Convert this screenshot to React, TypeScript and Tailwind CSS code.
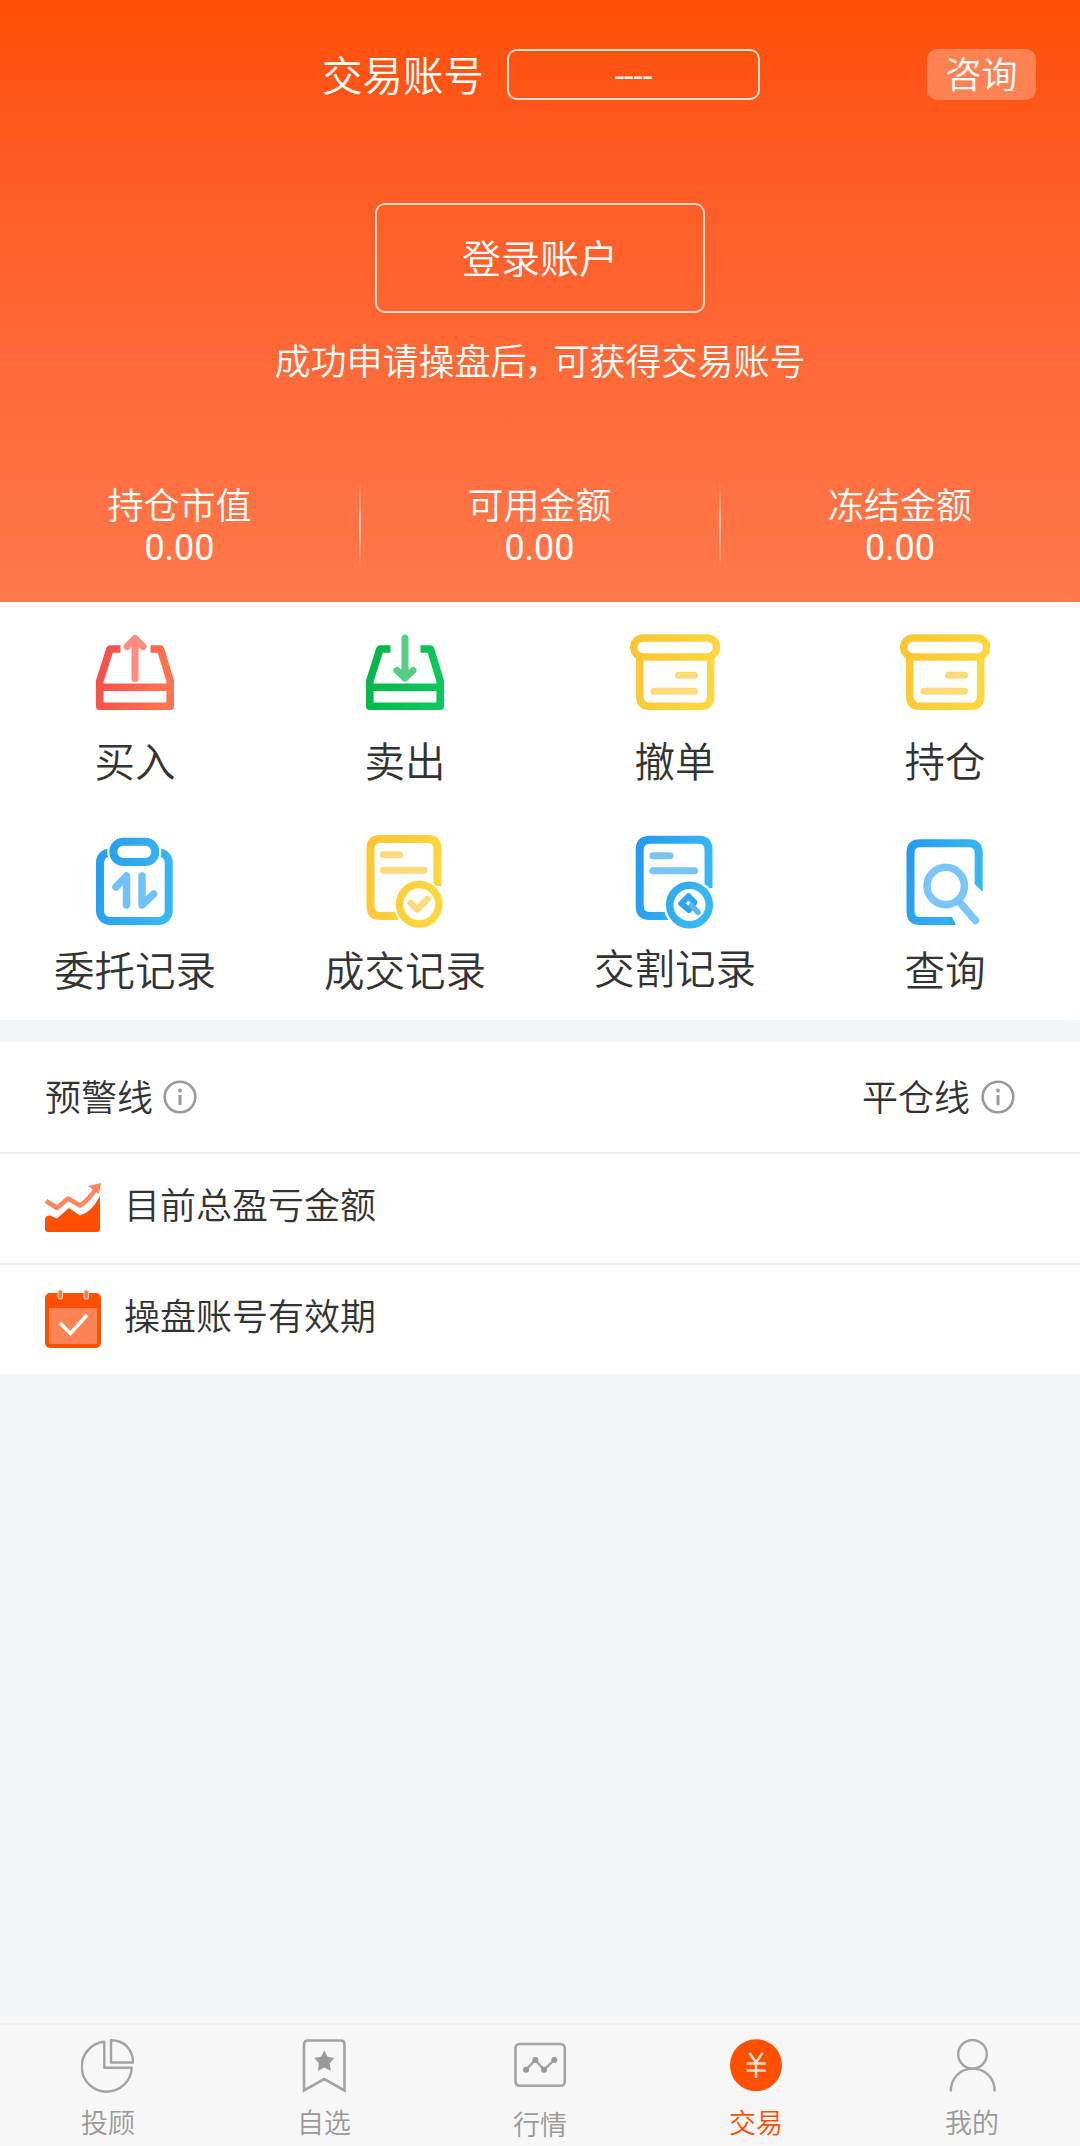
import type { ReactNode } from 'react'

interface Action {
  label:  string
  icon:   ReactNode
  raised?: boolean
}

interface Tab {
  label:   string
  icon:    ReactNode
  active?: boolean
  low?:    boolean
}

/* Shared horizontal gradients for the shortcut icons */
function Gradients() {
  return (
    <svg className="absolute h-0 w-0" aria-hidden="true">
      <defs>
        <linearGradient id="red" gradientUnits="userSpaceOnUse" x1="6" y1="0" x2="84" y2="20">
          <stop offset="0" stopColor="#f4474a" />
          <stop offset="1" stopColor="#ff7350" />
        </linearGradient>
        <linearGradient id="green" gradientUnits="userSpaceOnUse" x1="6" y1="0" x2="84" y2="20">
          <stop offset="0" stopColor="#05b243" />
          <stop offset="1" stopColor="#0cc85c" />
        </linearGradient>
        <linearGradient id="yellow" gradientUnits="userSpaceOnUse" x1="6" y1="0" x2="84" y2="20">
          <stop offset="0" stopColor="#fcc434" />
          <stop offset="1" stopColor="#fdd73e" />
        </linearGradient>
        <linearGradient id="blue" gradientUnits="userSpaceOnUse" x1="6" y1="0" x2="84" y2="20">
          <stop offset="0" stopColor="#2698ee" />
          <stop offset="1" stopColor="#36b9f2" />
        </linearGradient>
      </defs>
    </svg>
  )
}

function TrayBody({ stroke }: { stroke: string }) {
  return (
    <g fill="none" stroke={stroke} strokeWidth="7.6" strokeLinejoin="round">
      <path d="M30.5 24H20L9.800 56V81.300H80.200V56L70.500 24H60.500" />
      <path d="M10 62.300H80" />
    </g>
  )
}

function BuyIcon() {
  return (
    <svg className="h-[96px] w-[90px]" viewBox="0 0 90 96">
      <TrayBody stroke="url(#red)" />
      <path d="M45 53.500V14M37 21.500L45 13.500L53 21.500" fill="none" stroke="#ff8c7e" strokeWidth="7" strokeLinecap="round" strokeLinejoin="round" />
    </svg>
  )
}

function SellIcon() {
  return (
    <svg className="h-[96px] w-[90px]" viewBox="0 0 90 96">
      <TrayBody stroke="url(#green)" />
      <path d="M45 13V53M37 45.500L45 53L53 45.500" fill="none" stroke="#55cd82" strokeWidth="7" strokeLinecap="round" strokeLinejoin="round" />
    </svg>
  )
}

function BoxIcon() {
  return (
    <svg className="h-[96px] w-[90px]" viewBox="0 0 90 96" fill="none" strokeWidth="7.5" strokeLinecap="round">
      <rect x="3.7" y="12.9" width="83" height="19" rx="9.5" stroke="url(#yellow)" />
      <path d="M9.800 33V71Q9.800 81.300 20 81.300H70.500Q80.700 81.300 80.700 71V33" stroke="url(#yellow)" />
      <path d="M48.500 50.300H64.500M24 66.300H64.500" stroke="#fddb7c" strokeWidth="7" />
    </svg>
  )
}

function EntrustIcon() {
  return (
    <svg className="h-[96px] w-[90px]" viewBox="0 0 90 96" fill="none" strokeLinecap="round" strokeLinejoin="round">
      <rect x="10" y="18.500" width="68.700" height="68.500" rx="10" stroke="url(#blue)" strokeWidth="8" />
      <rect x="23.300" y="7.700" width="42" height="20.300" rx="10" fill="#fff" stroke="#fff" strokeWidth="12" />
      <rect x="23.300" y="7.700" width="42" height="20.300" rx="10" stroke="url(#blue)" strokeWidth="8" />
      <path d="M26 53L36.500 42V71M52 42V71L63.500 60" stroke="#70c2fa" strokeWidth="7.500" />
    </svg>
  )
}

function DealIcon() {
  return (
    <svg className="h-[96px] w-[90px]" viewBox="0 0 90 96" fill="none" strokeLinecap="round" strokeLinejoin="round">
      <path d="M77.500 52V15Q77.500 5 68 5H20Q10.500 5 10.500 15V72Q10.500 82 20 82H38" stroke="url(#yellow)" strokeWidth="8" strokeLinecap="butt" />
      <path d="M23.500 20.700H39.500M23.500 36.300H64" stroke="#fddb7c" strokeWidth="7" />
      <circle cx="59.200" cy="70.300" r="25.500" fill="#fff" />
      <circle cx="59.200" cy="70.300" r="19.700" stroke="url(#yellow)" strokeWidth="7.500" />
      <path d="M50.500 69L57 75.500L67.500 65" stroke="#fddb7c" strokeWidth="6.500" />
    </svg>
  )
}

function DeliveryIcon() {
  return (
    <svg className="h-[96px] w-[90px]" viewBox="0 0 90 96" fill="none" strokeLinecap="round" strokeLinejoin="round">
      <path d="M78.500 54V16Q78.500 5.700 69 5.700H20Q9.700 5.700 9.700 16V72Q9.700 82 20 82H38" stroke="url(#blue)" strokeWidth="8" strokeLinecap="butt" />
      <path d="M23 21.700H40M23 36.700H64.500" stroke="#78c5f2" strokeWidth="7" />
      <circle cx="59.500" cy="71" r="26" fill="#fff" />
      <circle cx="59.500" cy="71" r="19.800" stroke="url(#blue)" strokeWidth="7.500" />
      <path d="M51.300 69.500L58.500 62.300L64.500 68.300L59 76Z" stroke="#2fa5f0" strokeWidth="6" />
      <path d="M62 71.500L68 78.500" stroke="#56b8f4" strokeWidth="5.500" />
    </svg>
  )
}

function QueryIcon() {
  return (
    <svg className="h-[96px] w-[90px]" viewBox="0 0 90 96" fill="none">
      <path d="M78.700 19Q78.700 9.300 69 9.300H20Q10.500 9.300 10.500 19V77Q10.500 87 20 87H50" stroke="url(#blue)" strokeWidth="8" />
      <path d="M74.700 18H82.700V58L74.700 50Z" fill="#36b7f2" />
      <path d="M49 83H52L56 91H49Z" fill="#2fabf0" />
      <circle cx="45.700" cy="52" r="18.700" stroke="#7ac6f8" strokeWidth="7.500" />
      <path d="M58.500 67L75.500 86.500" stroke="#7ac6f8" strokeWidth="7.500" strokeLinecap="round" />
    </svg>
  )
}

function InfoIcon() {
  return (
    <svg className="size-[34px]" viewBox="0 0 34 34" fill="none" stroke="#999">
      <circle cx="17" cy="17" r="15.300" strokeWidth="2.600" />
      <path d="M17 15V25" strokeWidth="3" />
      <circle cx="17" cy="10.500" r="2" fill="#999" stroke="none" />
    </svg>
  )
}

function ProfitIcon() {
  return (
    <svg className="mb-0.5 h-[50px] w-[56px]" viewBox="0 0 56 50">
      <path d="M0 36Q1 32 5 32.500L12 35.500L24 25L35 32.500Q46 30 55 13V46Q55 49 52 49H3Q0 49 0 46Z" fill="#ff4f05" />
      <path d="M1 18L12 25L23 15.500L35 22.500Q44 17 52 4" fill="none" stroke="#ff8660" strokeWidth="4.500" strokeLinejoin="round" />
      <path d="M43 3L56 0L54 11Z" fill="#ff8660" />
    </svg>
  )
}

function ExpiryIcon() {
  return (
    <svg className="mb-0.5 h-[60px] w-[56px]" viewBox="0 0 56 60">
      <rect y="4" width="56" height="55" rx="5" fill="#ff4f05" />
      <rect x="4" y="19" width="48" height="36" rx="1" fill="#ff8455" />
      <rect x="13" y="1" width="4.500" height="9" rx="2.200" fill="#ff7a48" stroke="#ffc9b0" strokeWidth="1.200" />
      <rect x="39" y="1" width="4.500" height="9" rx="2.200" fill="#ff7a48" stroke="#ffc9b0" strokeWidth="1.200" />
      <path d="M15 34L25.500 44.500L42 26" fill="none" stroke="#fff" strokeWidth="3.500" />
    </svg>
  )
}

function PieIcon() {
  return (
    <svg className="size-[54px]" viewBox="0 0 54 54" fill="none" stroke="#a3a3a3" strokeWidth="2.400" strokeLinejoin="round">
      <path d="M23.300 2.800A25 25 0 1 0 50.700 28.700H23.300Z" />
      <path d="M30 1.200V23.500H52C52 10 43 1.200 30 1.200Z" />
    </svg>
  )
}

function BookmarkIcon() {
  return (
    <svg className="size-[54px]" viewBox="0 0 54 54" fill="none">
      <path d="M7 51.500V5.500Q7 1.500 11 1.500H43.500Q47.500 1.500 47.500 5.500V51.500L27.300 40Z" stroke="#a3a3a3" strokeWidth="2.600" />
      <path d="M27.300 11.500L30.500 17.800L37.500 19L32.700 24.300L33.700 31.800L27.300 28.600L20.900 31.800L21.900 24.300L17.100 19L24.100 17.800Z" fill="#999" />
    </svg>
  )
}

function MarketIcon() {
  return (
    <svg className="size-[54px]" viewBox="0 0 54 54" fill="none" stroke="#a3a3a3">
      <rect x="2.500" y="5" width="49.300" height="41.700" rx="4" strokeWidth="2.600" />
      <path d="M13 30.700L22.300 21L31 30.700L41.300 21" strokeWidth="2.400" />
      <g fill="#999" stroke="none">
        <circle cx="13" cy="30.700" r="3" />
        <circle cx="22.300" cy="21" r="3" />
        <circle cx="31" cy="30.700" r="3" />
        <circle cx="41.300" cy="21" r="3" />
      </g>
    </svg>
  )
}

function YenIcon() {
  return (
    <svg className="size-[54px]" viewBox="0 0 54 54" fill="none">
      <circle cx="27" cy="26.200" r="26" fill="#ff4f02" />
      <path d="M20.500 14L27 23.500L33.500 14M27 23.500V39M17.700 24.500H36.700M17.700 31.500H36.700" stroke="#ffe0d0" strokeWidth="2.400" />
    </svg>
  )
}

function UserIcon() {
  return (
    <svg className="size-[54px]" viewBox="0 0 54 54" fill="none" stroke="#a3a3a3" strokeWidth="2.400">
      <circle cx="27.500" cy="15.300" r="14.300" />
      <path d="M5.800 52.500C5.800 39 15 29.600 27.700 29.600S49.700 39 49.700 52.500" />
    </svg>
  )
}

const stats = [
  { label: '持仓市值', value: '0.00' },
  { label: '可用金额', value: '0.00' },
  { label: '冻结金额', value: '0.00' },
]

const actions: Action[] = [
  { label: '买入',     icon: <BuyIcon /> },
  { label: '卖出',     icon: <SellIcon /> },
  { label: '撤单',     icon: <BoxIcon /> },
  { label: '持仓',     icon: <BoxIcon /> },
  { label: '委托记录', icon: <EntrustIcon /> },
  { label: '成交记录', icon: <DealIcon /> },
  { label: '交割记录', icon: <DeliveryIcon />, raised: true },
  { label: '查询',     icon: <QueryIcon /> },
]

const tabs: Tab[] = [
  { label: '投顾', icon: <PieIcon /> },
  { label: '自选', icon: <BookmarkIcon /> },
  { label: '行情', icon: <MarketIcon />, low: true },
  { label: '交易', icon: <YenIcon />, active: true },
  { label: '我的', icon: <UserIcon /> },
]

function Header() {
  return (
    <header className="flex h-[602px] flex-col bg-linear-to-b from-[#ff4e02] to-[#ff784b] text-white">
      <div className="mt-[49px] grid h-[51px] grid-cols-[322px_1fr_auto] pr-11">
        <span />
        <div className="flex items-center">
          <span className="w-[185px] pt-[5px] text-[40.5px] leading-none">交易账号</span>
          <div className="flex h-[51px] w-[253px] items-center justify-center rounded-[10px] border-2 border-[#ffe0d0] pt-0.5 text-[34px] leading-none font-normal">
            ----
          </div>
        </div>
        <button className="h-[51px] w-[109px] rounded-[10px] bg-[#ff8254] pt-[3px] text-[36px] leading-none">咨询</button>
      </div>

      <button className="mx-auto mt-[103px] h-[110px] w-[330px] rounded-[10px] border-2 border-[#ffd6c2] pt-[5px] text-[39px] leading-none">
        登录账户
      </button>
      <p className="mt-[30px] text-center text-[36px] leading-[40px]">
        成功申请操盘后<span className="-ml-0.5 tracking-[-7px]">，</span>可获得交易账号
      </p>

      <div className="mt-[98px] grid grid-cols-3">
        {stats.map((s, i) => (
          <div key={s.label} className="flex h-[88px] items-center">
            <div className="flex flex-1 flex-col items-center pt-[5px]">
              <span className="text-[36px] leading-[42px]">{s.label}</span>
              <span className="text-[36px] leading-[41px] font-normal">{s.value}</span>
            </div>
            {i < 2 && <div className="-mr-px h-[88px] w-0.5 bg-linear-to-b from-white/0 via-white/60 to-white/0" />}
          </div>
        ))}
      </div>
    </header>
  )
}

export default function App() {
  return (
    <div className="flex h-[2146px] w-[1080px] flex-col overflow-hidden bg-[#f3f6f9] font-[Roboto,'Noto_Sans_CJK_SC',sans-serif] font-[350] text-[#333]">
      <Gradients />
      <Header />

      <section className="grid h-[418px] grid-cols-4 content-start bg-white pt-[23px]">
        {actions.map(a => (
          <div key={a.label} className="flex h-[209px] flex-col items-center">
            {a.icon}
            <span className={`text-[40.5px] leading-[50px] ${a.raised ? 'mt-[15px]' : 'mt-[17px]'}`}>{a.label}</span>
          </div>
        ))}
      </section>

      <section className="mt-[22px] bg-white text-[36px] leading-none">
        <div className="flex h-[112px] items-center justify-between border-b-2 border-[#efefef] pr-[65px] pl-[45px]">
          <div className="flex items-center gap-[10px]">
            <span className="pt-1">预警线</span>
            <InfoIcon />
          </div>
          <div className="flex items-center gap-[11px]">
            <span className="pt-1">平仓线</span>
            <InfoIcon />
          </div>
        </div>
        <div className="flex h-[111px] items-center border-b-2 border-[#efefef] pl-[45px]">
          <ProfitIcon />
          <span className="mb-1 ml-[23px]">目前总盈亏金额</span>
        </div>
        <div className="flex h-[109px] items-center pl-[45px]">
          <ExpiryIcon />
          <span className="mb-1 ml-[23px]">操盘账号有效期</span>
        </div>
      </section>

      <nav className="mt-auto bg-[#f7f7f7] pt-1.5">
        <div className="grid h-[123px] grid-cols-5 border-t-2 border-[#efefef]">
          {tabs.map(t => (
            <div
              key={t.label}
              className={`flex flex-col items-center pt-[14px] text-[27px] leading-[32px] ${t.active ? 'text-[#ff4f02]' : 'text-[#999]'}`}
            >
              {t.icon}
              <span className={t.low ? 'mt-[17px]' : 'mt-[15px]'}>{t.label}</span>
            </div>
          ))}
        </div>
      </nav>
    </div>
  )
}
